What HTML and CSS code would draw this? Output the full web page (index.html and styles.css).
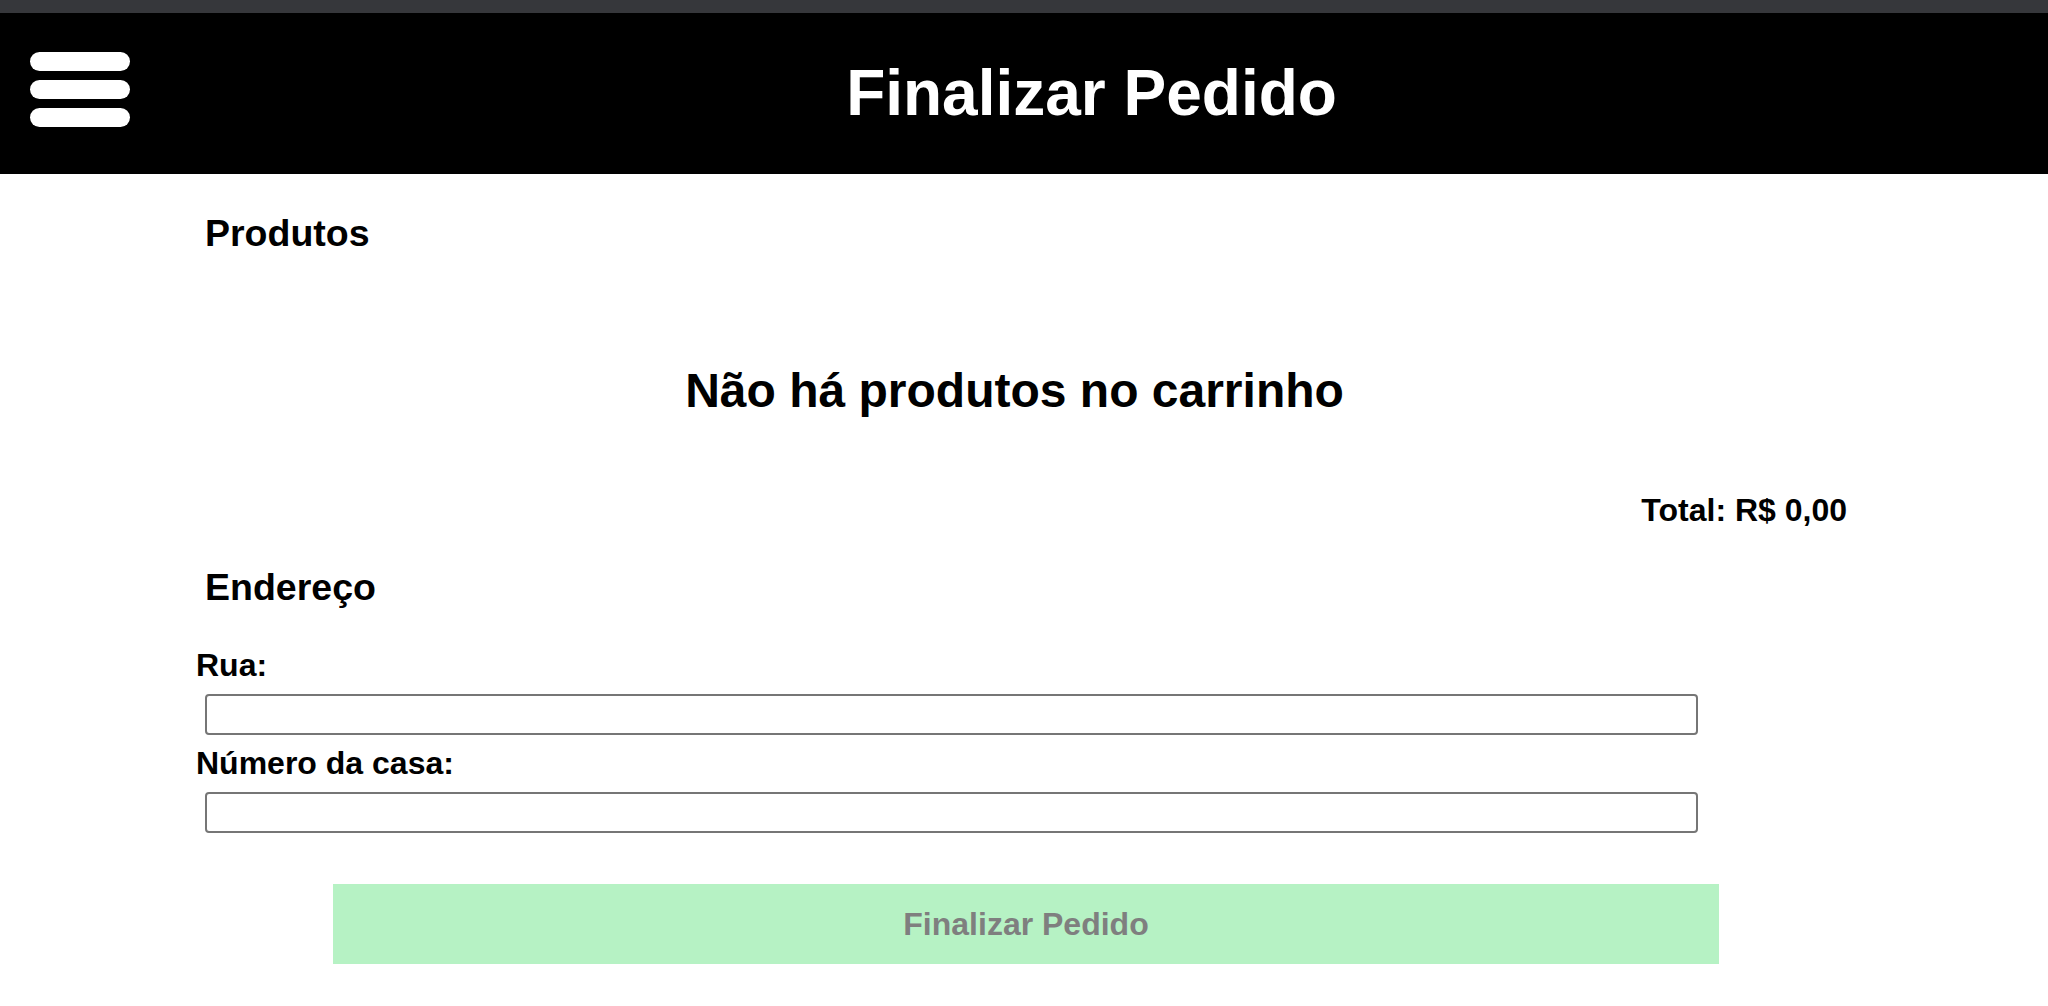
FILE: index.html
```html
<!DOCTYPE html>
<html lang="pt-BR">
<head>
<meta charset="utf-8">
<title>Finalizar Pedido</title>
<link rel="stylesheet" href="styles.css">
</head>
<body>
<div class="topstrip"></div>
<header class="header">
  <div class="menu" aria-label="Menu">
    <span class="bar"></span>
    <span class="bar"></span>
    <span class="bar"></span>
  </div>
  <h1 class="title">Finalizar Pedido</h1>
</header>
<main class="content">
  <h2 class="section-title products-title">Produtos</h2>
  <p class="empty">Não há produtos no carrinho</p>
  <p class="total">Total: R$ 0,00</p>
  <h2 class="section-title address-title">Endereço</h2>
  <form class="address-form">
    <label class="label label-first" for="rua">Rua:</label>
    <input class="field" id="rua" type="text">
    <label class="label" for="numero">Número da casa:</label>
    <input class="field" id="numero" type="text">
    <button class="submit" type="button" disabled>Finalizar Pedido</button>
  </form>
</main>
</body>
</html>
```

FILE: styles.css
```css
* {
  box-sizing: border-box;
}

html, body {
  margin: 0;
  padding: 0;
  background: #ffffff;
  font-family: "Liberation Sans", Arial, Helvetica, sans-serif;
  color: #000000;
}

.topstrip {
  height: 13px;
  background: #36373b;
}

.header {
  height: 161px;
  background: #000000;
  display: flex;
  align-items: center;
}

.menu {
  margin-left: 30px;
  margin-bottom: 8px;
  width: 100px;
  display: flex;
  flex-direction: column;
  gap: 9px;
}

.bar {
  display: block;
  height: 19px;
  border-radius: 10px;
  background: #ffffff;
}

.title {
  flex: 1;
  margin: 0;
  padding-left: 5px;
  text-align: center;
  color: #ffffff;
  font-size: 64px;
  font-weight: 700;
  line-height: 1.15;
}

.content {
  margin-left: 193px;
  width: 1655px;
}

.section-title {
  margin: 0;
  padding-left: 12px;
  font-size: 37.5px;
  font-weight: 700;
  line-height: 44px;
}

.products-title {
  margin-top: 37px;
}

.empty {
  margin: 108px 0 0;
  padding-right: 12px;
  text-align: center;
  font-size: 48px;
  font-weight: 700;
  line-height: 56px;
}

.total {
  margin: 73px 0 0;
  padding-right: 1px;
  text-align: right;
  font-size: 32px;
  font-weight: 700;
  line-height: 36px;
}

.address-title {
  margin-top: 37px;
}

.address-form {
  display: flex;
  flex-direction: column;
  align-items: flex-start;
  margin: 0;
}

.label {
  display: block;
  margin-top: 10px;
  margin-left: 3px;
  font-size: 32px;
  font-weight: 700;
  line-height: 36px;
}

.label-first {
  margin-top: 38px;
}

.field {
  display: block;
  margin: 11px 0 0 12px;
  width: 1493px;
  height: 41px;
  border: 2px solid #767676;
  border-radius: 4px;
  background: #ffffff;
  padding: 0 6px;
  font-family: inherit;
  font-size: 20px;
}

.submit {
  margin: 51px 0 0 140px;
  width: 1386px;
  height: 80px;
  border: none;
  background: #b6f2c4;
  color: #7f7f7f;
  font-family: inherit;
  font-size: 32px;
  font-weight: 700;
  padding: 0;
}
```
